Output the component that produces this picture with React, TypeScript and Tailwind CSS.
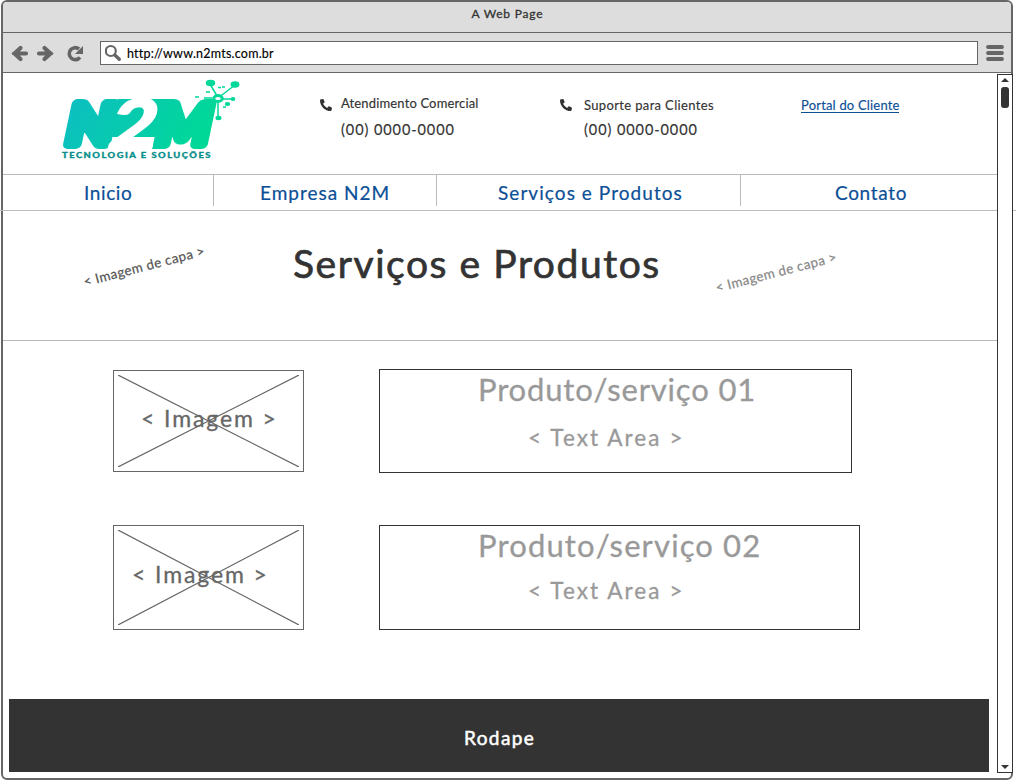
import { useLayoutEffect, useRef, useState } from "react";
import type { ReactNode } from "react";
import { FaPhoneAlt } from "react-icons/fa";

/* One line of text whose tracking is adjusted so that it fills the width of its box. */
function Line({ text, className }: { text: string; className: string }) {
  const box = useRef<HTMLDivElement>(null);
  const inner = useRef<HTMLSpanElement>(null);
  const [spacing, setSpacing] = useState(0);

  useLayoutEffect(() => {
    if (!box.current || !inner.current) return;
    const natural = inner.current.offsetWidth;
    setSpacing((box.current.offsetWidth - natural) / (text.length - 1));
  }, [text]);

  return (
    <div ref={box} className={`shrink-0 whitespace-nowrap leading-none ${className}`}>
      <span ref={inner} style={{ letterSpacing: `${spacing}px` }}>
        {text}
      </span>
    </div>
  );
}

function Logo() {
  return (
    <svg width="184" height="86" viewBox="60 76 184 86" className="shrink-0 overflow-visible">
      <defs>
        <linearGradient id="brand" gradientUnits="userSpaceOnUse" x1="70" y1="100" x2="200" y2="150">
          <stop offset="0" stopColor="#0cbfc0" />
          <stop offset="1" stopColor="#00d898" />
        </linearGradient>
        <linearGradient id="brandLetters" gradientUnits="userSpaceOnUse" x1="0" y1="-45" x2="130" y2="5">
          <stop offset="0" stopColor="#0cbfc0" />
          <stop offset="1" stopColor="#00d898" />
        </linearGradient>
      </defs>
      <g
        transform="translate(64 144) skewX(-12)"
        fill="url(#brandLetters)"
        stroke="url(#brandLetters)"
        strokeLinejoin="round"
        strokeWidth="10"
        fontFamily="Lato, sans-serif"
        fontWeight="900"
        fontSize="55"
      >
        <text x="0" y="0" textLength="46" lengthAdjust="spacingAndGlyphs">N</text>
        <text x="90" y="0" textLength="53" lengthAdjust="spacingAndGlyphs">M</text>
      </g>
      <path d="M118 99H168L164 149H152L156 137H118L108 137Z" fill="url(#brand)" />
      <text
        transform="translate(106 149) skewX(-14)"
        fontFamily="Lato, sans-serif"
        fontWeight="900"
        fontSize="69"
        fill="#fff"
        stroke="#fff"
        strokeWidth="2"
        textLength="45"
        lengthAdjust="spacingAndGlyphs"
      >
        2
      </text>
      <g fill="#00d89a" stroke="#00d89a" strokeWidth="1.5">
        <path d="M210 84L217 96M218 98L235 85M220 99H232M218 100V117" fill="none" />
        <ellipse cx="210.500" cy="83" rx="4" ry="2.500" />
        <ellipse cx="235" cy="84.500" rx="3.700" ry="2.400" />
        <ellipse cx="233" cy="99" rx="1.600" ry="1.300" />
        <ellipse cx="218.500" cy="118" rx="2.300" ry="1.500" />
        <ellipse cx="227.500" cy="104" rx="2" ry="1.200" />
        <ellipse cx="218" cy="98.500" rx="4.300" ry="3" fill="#fff" strokeWidth="3" />
        <path d="M195 97H199M206 92H210M218 87.500H221M222 87H225M204 98H212M223 107H226" fill="none" />
      </g>
      <text
        x="62"
        y="158"
        fontFamily="Lato, sans-serif"
        fontWeight="900"
        fontSize="7.500"
        letterSpacing="1.2"
        fill="#078f8b"
        stroke="#078f8b"
        strokeWidth="0.3"
        textLength="150"
        lengthAdjust="spacingAndGlyphs"
      >
        TECNOLOGIA E SOLUÇÕES
      </text>
    </svg>
  );
}

function Toolbar() {
  return (
    <div className="flex h-10 items-center border-b border-[#666] bg-[#ddd] pl-2">
      <svg width="80" height="24" viewBox="11 40 80 24" fill="none" stroke="#666" className="shrink-0">
        <path d="M14 52.500H26M20.500 47L14.500 52.500L20.500 58" strokeWidth="4.200" strokeLinecap="round" />
        <path d="M39 52.500H51M44.500 47L50.500 52.500L44.500 58" strokeWidth="4.200" strokeLinecap="round" />
        <path d="M80 56.300A6 6 0 1 1 79 48" strokeWidth="3.600" />
        <path d="M83 45V53H75Z" fill="#666" stroke="none" />
      </svg>
      <div className="ml-[9px] flex h-6 w-[878px] shrink-0 items-center border border-[#666] bg-white pl-1">
        <svg width="18" height="20" viewBox="105 43 18 20" fill="none" stroke="#666" className="shrink-0">
          <circle cx="110.800" cy="51" r="5" strokeWidth="2.200" />
          <path d="M114.800 55L119.300 59.300" strokeWidth="3.400" strokeLinecap="round" />
        </svg>
        <Line text="http://www.n2mts.com.br" className="ml-1 mt-[3px] w-[146px] text-[12.5px] text-black [-webkit-text-stroke:0.15px_black]" />
      </div>
      <svg width="18" height="18" viewBox="0 0 18 18" className="ml-2 shrink-0" stroke="#666" strokeWidth="3.800" strokeLinecap="round">
        <path d="M2 3H16M2 9H16M2 15H16" />
      </svg>
    </div>
  );
}

function Scrollbar() {
  return (
    <div className="absolute left-[997px] top-[74px] z-20 flex h-[699px] w-4 flex-col items-center justify-between border border-[#333] bg-white pb-[3px] pt-[3px]">
      <div className="flex flex-col items-center gap-[5px]">
        <svg width="8" height="4" viewBox="0 0 8 4" fill="#333">
          <path d="M0 4L4 0L8 4Z" />
        </svg>
        <div className="h-[21px] w-2 rounded-[3px] bg-[#333]" />
      </div>
      <svg width="8" height="4" viewBox="0 0 8 4" fill="#333">
        <path d="M0 0L4 4L8 0Z" />
      </svg>
    </div>
  );
}

function Contact({ className, labelClass, numberClass, label }: { className: string; labelClass: string; numberClass: string; label: string }) {
  return (
    <div className={`flex shrink-0 ${className}`}>
      <FaPhoneAlt className="mt-[26px] size-3 shrink-0 text-[#333]" />
      <div className="flex flex-col">
        <Line text={label} className={`text-[13px] ${labelClass}`} />
        <Line text="(00) 0000-0000" className={`w-[113px] text-[14.5px] ${numberClass}`} />
      </div>
    </div>
  );
}

function ImageBox({ className, children }: { className: string; children: ReactNode }) {
  return (
    <div className={`grid w-[191px] shrink-0 border border-[#666] ${className}`}>
      <svg className="h-full w-full p-1 [grid-area:1/1]" viewBox="0 0 181 92" preserveAspectRatio="none" stroke="#666" strokeWidth="1.200">
        <path d="M0 0L181 92M181 0L0 92" vectorEffect="non-scaling-stroke" />
      </svg>
      <div className="[grid-area:1/1]">{children}</div>
    </div>
  );
}

export default function App() {
  return (
    <div className="relative flex h-[780px] w-[1016px] overflow-hidden bg-white pl-px font-['Lato',sans-serif] text-[#333]">
      <div className="flex h-[780px] w-[1012px] flex-col overflow-hidden rounded-[6px] border-2 border-[#666] bg-white">
        <div className="flex h-[31px] shrink-0 justify-center border-b border-[#666] bg-[#ddd] pt-[6px]">
          <Line text="A Web Page" className="w-[71px] text-[12px] [-webkit-text-stroke:0.3px_#333]" />
        </div>
        <Toolbar />

        <div className="flex w-[994px] flex-col">
          <header className="flex h-[102px] shrink-0 border-b border-[#bbb] [-webkit-text-stroke:0.15px_currentColor]">
            <div className="ml-[57px] mt-[3px] w-[184px] shrink-0">
              <Logo />
            </div>
            <Contact className="ml-[76px] w-[240px]" label="Atendimento Comercial" labelClass="ml-[9px] mt-[24px] w-[137px]" numberClass="ml-[9px] mt-[13px]" />
            <Contact className="w-[240px]" label="Suporte para Clientes" labelClass="ml-3 mt-[26px] w-[130px]" numberClass="ml-3 mt-[11px]" />
            <a href="#" className="ml-px mt-[26px] block h-[14px] w-[98px] border-b border-[#0b4f97] text-[#0b4f97]">
              <Line text="Portal do Cliente" className="w-[98px] text-[13px]" />
            </a>
          </header>

          <nav className="flex h-9 shrink-0 text-[19px] text-[#0b4f97] [-webkit-text-stroke:0.2px_#0b4f97]">
            <div className="h-[31px] w-[211px] shrink-0 border-r border-[#bbb] pl-[81px] pt-[8px]">
              <Line text="Inicio" className="w-[48px]" />
            </div>
            <div className="h-[31px] w-[223px] shrink-0 border-r border-[#bbb] pl-[46px] pt-[8px]">
              <Line text="Empresa N2M" className="w-[129px]" />
            </div>
            <div className="h-[31px] w-[304px] shrink-0 border-r border-[#bbb] pl-[61px] pt-[8px]">
              <Line text="Serviços e Produtos" className="w-[184px]" />
            </div>
            <div className="h-[31px] w-[256px] shrink-0 pl-[94px] pt-[8px]">
              <Line text="Contato" className="w-[71px]" />
            </div>
          </nav>

          <section className="flex h-[130px] shrink-0 border-b border-[#bbb]">
            <Line text="< Imagem de capa >" className="ml-[79px] mt-[49px] h-[14px] w-[124px] origin-center -rotate-[14.500deg] text-[13.5px] text-[#555] [-webkit-text-stroke:0.2px_#555]" />
            <Line text="Serviços e Produtos" className="ml-[87px] mt-[33px] w-[366px] text-[39px] [-webkit-text-stroke:0.7px_#333]" />
            <Line text="< Imagem de capa >" className="ml-[55px] mt-[55px] h-[14px] w-[124px] origin-center -rotate-[14.500deg] text-[13.5px] text-[#888] [-webkit-text-stroke:0.2px_#888]" />
          </section>

          <main className="flex h-[358px] shrink-0 flex-col gap-[52px] pl-[110px] pt-7">
            <div className="flex h-[104px] gap-[75px]">
              <ImageBox className="mt-px h-[102px]">
                <Line text="< Imagem >" className="ml-[27px] mt-[36px] w-[135px] text-[23px] text-[#666] [-webkit-text-stroke:0.3px_#666]" />
              </ImageBox>
              <div className="w-[473px] border border-[#333] text-[#999] [-webkit-text-stroke:0.3px_#999]">
                <Line text="Produto/serviço 01" className="ml-[98px] mt-[4px] w-[277px] text-[31px]" />
                <Line text="< Text Area >" className="ml-[148px] mt-[22px] w-[154px] text-[22.5px]" />
              </div>
            </div>
            <div className="flex h-[105px] gap-[75px]">
              <ImageBox className="h-[105px]">
                <Line text="< Imagem >" className="ml-[18px] mt-[37px] w-[135px] text-[23px] text-[#666] [-webkit-text-stroke:0.3px_#666]" />
              </ImageBox>
              <div className="w-[481px] border border-[#333] text-[#999] [-webkit-text-stroke:0.3px_#999]">
                <Line text="Produto/serviço 02" className="ml-[98px] mt-[4px] w-[282px] text-[31px]" />
                <Line text="< Text Area >" className="ml-[148px] mt-[19px] w-[154px] text-[22.5px]" />
              </div>
            </div>
          </main>

          <footer className="ml-[6px] h-[73px] w-[980px] shrink-0 bg-[#333] pl-[455px] pt-[29px] text-white [-webkit-text-stroke:0.5px_white]">
            <Line text="Rodape" className="w-[70px] text-[19px]" />
          </footer>
        </div>
      </div>
      <div className="absolute left-0 top-[210px] z-10 h-px w-full bg-[#bbb]" />
      <Scrollbar />
    </div>
  );
}
